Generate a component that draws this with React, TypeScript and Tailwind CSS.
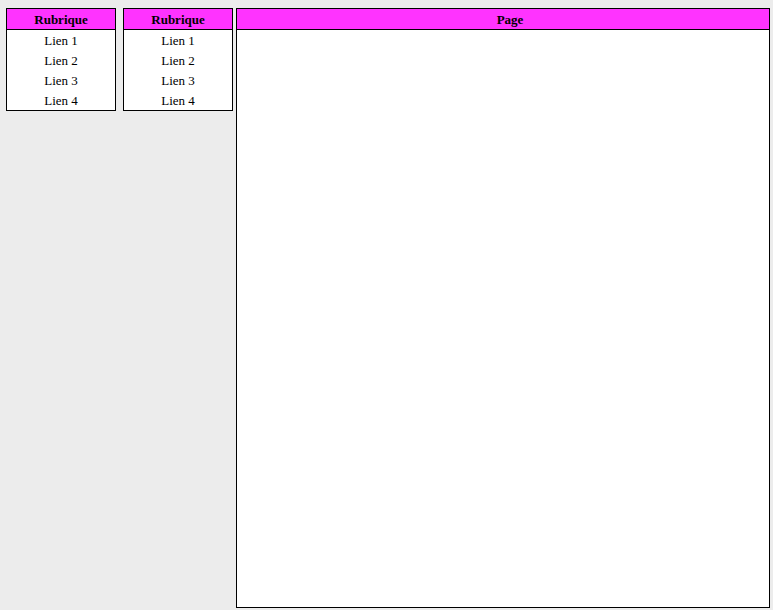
import React from "react";

const links = ["Lien 1", "Lien 2", "Lien 3", "Lien 4"];

const Rubrique = () => (
  <div className="w-[110px] border border-black bg-white">
    <div className="h-[21px] border-b border-black bg-[#ff33ff] pt-px text-center text-[13px] font-bold leading-[20px]">
      Rubrique
    </div>
    {links.map((l) => (
      <div key={l} className="h-5 pt-px text-center text-[13px] leading-5">
        {l}
      </div>
    ))}
  </div>
);

const App = () => (
  <div
    className="flex h-[610px] w-[773px] items-start bg-[#ececec] pl-[6px] pt-2 text-black"
    style={{ fontFamily: '"Liberation Serif", "Times New Roman", serif' }}
  >
    <Rubrique />
    <div className="ml-[7px]">
      <Rubrique />
    </div>
    <div className="ml-[3px] flex h-[600px] w-[534px] flex-col border border-black bg-white">
      <div className="h-[21px] border-b border-black bg-[#ff33ff] pl-[14px] pt-px text-center text-[13px] font-bold leading-[20px]">
        Page
      </div>
    </div>
  </div>
);

export default App;
